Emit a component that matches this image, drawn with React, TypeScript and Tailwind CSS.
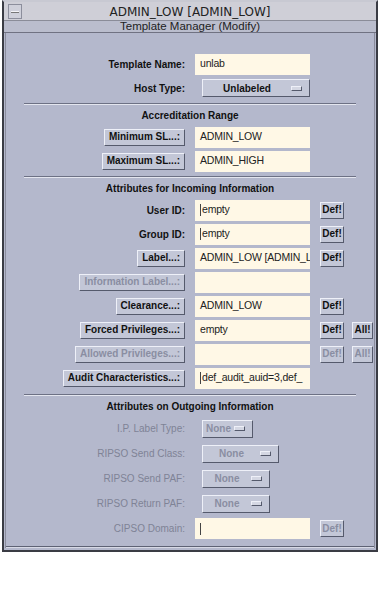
import React from "react";

const bevel =
  "border border-t-[#eef0f8] border-l-[#eef0f8] border-b-[#555a6c] border-r-[#555a6c]";

function Btn({
  children,
  disabled,
  w,
}: {
  children: React.ReactNode;
  disabled?: boolean;
  w?: string;
}) {
  return (
    <div
      className={`h-[17px] px-[4px] flex items-center justify-center bg-[#c3c7d7] ${bevel} text-[10px] font-bold leading-none whitespace-nowrap ${
        disabled ? "text-[#8a8ea2]" : "text-[#111]"
      } ${w ?? ""}`}
    >
      {children}
    </div>
  );
}

function Field({ value, cursor }: { value?: string; cursor?: boolean }) {
  return (
    <div className="w-[115px] h-[21px] bg-[#fff8e6] flex items-center pl-[5px] overflow-hidden whitespace-nowrap text-[10.5px] tracking-[-0.2px] text-[#222] font-['Liberation_Sans',sans-serif]">
      {cursor && <span className="w-[1px] h-[12px] bg-[#444] mr-[1px]" />}
      {value}
    </div>
  );
}

function Dropdown({
  value,
  w,
  disabled,
}: {
  value: string;
  w: string;
  disabled?: boolean;
}) {
  return (
    <div
      className={`h-[18px] ${w} flex items-center bg-[#c3c7d7] ${bevel} text-[10px] font-bold ${
        disabled ? "text-[#8a8ea2]" : "text-[#111]"
      }`}
    >
      <span className="flex-1 text-center">{value}</span>
      <span className={`w-[11px] h-[5px] mr-[7px] bg-[#d4d7e3] ${bevel}`} />
    </div>
  );
}

function Row({
  label,
  button,
  disabled,
  children,
  def,
  all,
  h = "h-[24px]",
}: {
  label: string;
  button?: boolean;
  disabled?: boolean;
  children: React.ReactNode;
  def?: "on" | "off";
  all?: "on" | "off";
  h?: string;
}) {
  return (
    <div className={`flex items-center ${h}`}>
      <div className="w-[179px] flex justify-end">
        {button ? (
          <Btn disabled={disabled}>{label}</Btn>
        ) : (
          <span
            className={`text-[10px] ${
              disabled ? "text-[#7f8396]" : "font-bold text-[#111]"
            }`}
          >
            {label}
          </span>
        )}
      </div>
      <div className="ml-[10px]">{children}</div>
      {def && (
        <div className="ml-[10px]">
          <Btn disabled={def === "off"} w="w-[24px]">
            Def!
          </Btn>
        </div>
      )}
      {all && (
        <div className="ml-[8px]">
          <Btn disabled={all === "off"} w="w-[21px]">
            All!
          </Btn>
        </div>
      )}
    </div>
  );
}

function Sep() {
  return (
    <div className="mx-[18px] border-t border-t-[#6d7184] border-b border-b-[#e4e6ef]" />
  );
}

function Heading({ children }: { children: React.ReactNode }) {
  return (
    <div className="h-[20px] flex items-center justify-center text-[10px] font-bold text-[#111]">
      {children}
    </div>
  );
}

export default function App() {
  return (
    <div className="w-[380px] h-[595px] bg-white font-['Liberation_Sans',sans-serif]">
      <div className="ml-[2px] w-[376px] border-[2px] border-[#3a3c44] border-t-[#c8c9d2] bg-[#b4b8cc]">
        <div className="h-[19px] pt-[2px] bg-[#cfcfd7] flex items-center relative border-b border-b-[#8a8c98]">
          <div className="absolute left-[4px] top-[2px] w-[14px] h-[15px] bg-[#cfd0da] border border-[#8c8e9c] flex items-center justify-center">
            <span className="w-[8px] h-[2px] bg-[#f4f4f8] border-b border-[#777]" />
          </div>
          <div className="flex-1 text-center text-[12px] text-[#222] font-['DejaVu_Sans',sans-serif] leading-none">
            ADMIN_LOW [ADMIN_LOW]
          </div>
        </div>
        <div className="h-[12px] bg-[#babdcd] flex items-center justify-center text-[11.5px] text-[#222] border-b border-b-[#707282] leading-none">
          Template Manager (Modify)
        </div>
        <div className="border-x border-x-[#8a8c9c] ml-[1px] mr-[1px]">
          <div className="pt-[19px]">
            <Row label="Template Name:">
              <Field value="unlab" />
            </Row>
            <Row label="Host Type:">
              <div className="ml-[7px]">
                <Dropdown value="Unlabeled" w="w-[108px]" />
              </div>
            </Row>
          </div>
          <div className="mt-[3px]">
            <Sep />
          </div>
          <Heading>Accreditation Range</Heading>
          <Row label="Minimum SL...:" button>
            <Field value="ADMIN_LOW" />
          </Row>
          <Row label="Maximum SL...:" button>
            <Field value="ADMIN_HIGH" />
          </Row>
          <div className="mt-[3px]">
            <Sep />
          </div>
          <Heading>Attributes for Incoming Information</Heading>
          <Row label="User ID:" def="on">
            <Field value="empty" cursor />
          </Row>
          <Row label="Group ID:" def="on">
            <Field value="empty" cursor />
          </Row>
          <Row label="Label...:" button def="on">
            <Field value="ADMIN_LOW [ADMIN_L" />
          </Row>
          <Row label="Information Label...:" button disabled>
            <Field />
          </Row>
          <Row label="Clearance...:" button def="on">
            <Field value="ADMIN_LOW" />
          </Row>
          <Row label="Forced Privileges...:" button def="on" all="on">
            <Field value="empty" />
          </Row>
          <Row label="Allowed Privileges...:" button disabled def="off" all="off">
            <Field />
          </Row>
          <Row label="Audit Characteristics...:" button>
            <Field value="def_audit_auid=3,def_" cursor />
          </Row>
          <div className="mt-[4px]">
            <Sep />
          </div>
          <Heading>Attributes on Outgoing Information</Heading>
          <Row label="I.P. Label Type:" disabled h="h-[25px]">
            <div className="ml-[7px]">
              <Dropdown value="None" w="w-[51px]" disabled />
            </div>
          </Row>
          <Row label="RIPSO Send Class:" disabled h="h-[25px]">
            <div className="ml-[7px]">
              <Dropdown value="None" w="w-[77px]" disabled />
            </div>
          </Row>
          <Row label="RIPSO Send PAF:" disabled h="h-[25px]">
            <div className="ml-[7px]">
              <Dropdown value="None" w="w-[68px]" disabled />
            </div>
          </Row>
          <Row label="RIPSO Return PAF:" disabled h="h-[25px]">
            <div className="ml-[7px]">
              <Dropdown value="None" w="w-[68px]" disabled />
            </div>
          </Row>
          <Row label="CIPSO Domain:" disabled def="off" h="h-[25px]">
            <Field cursor />
          </Row>
          <div className="h-[5px]" />
          <div className="border-t border-t-[#5e6274] border-b border-b-[#d8dae6] mb-[2px]" />
        </div>
      </div>
    </div>
  );
}
